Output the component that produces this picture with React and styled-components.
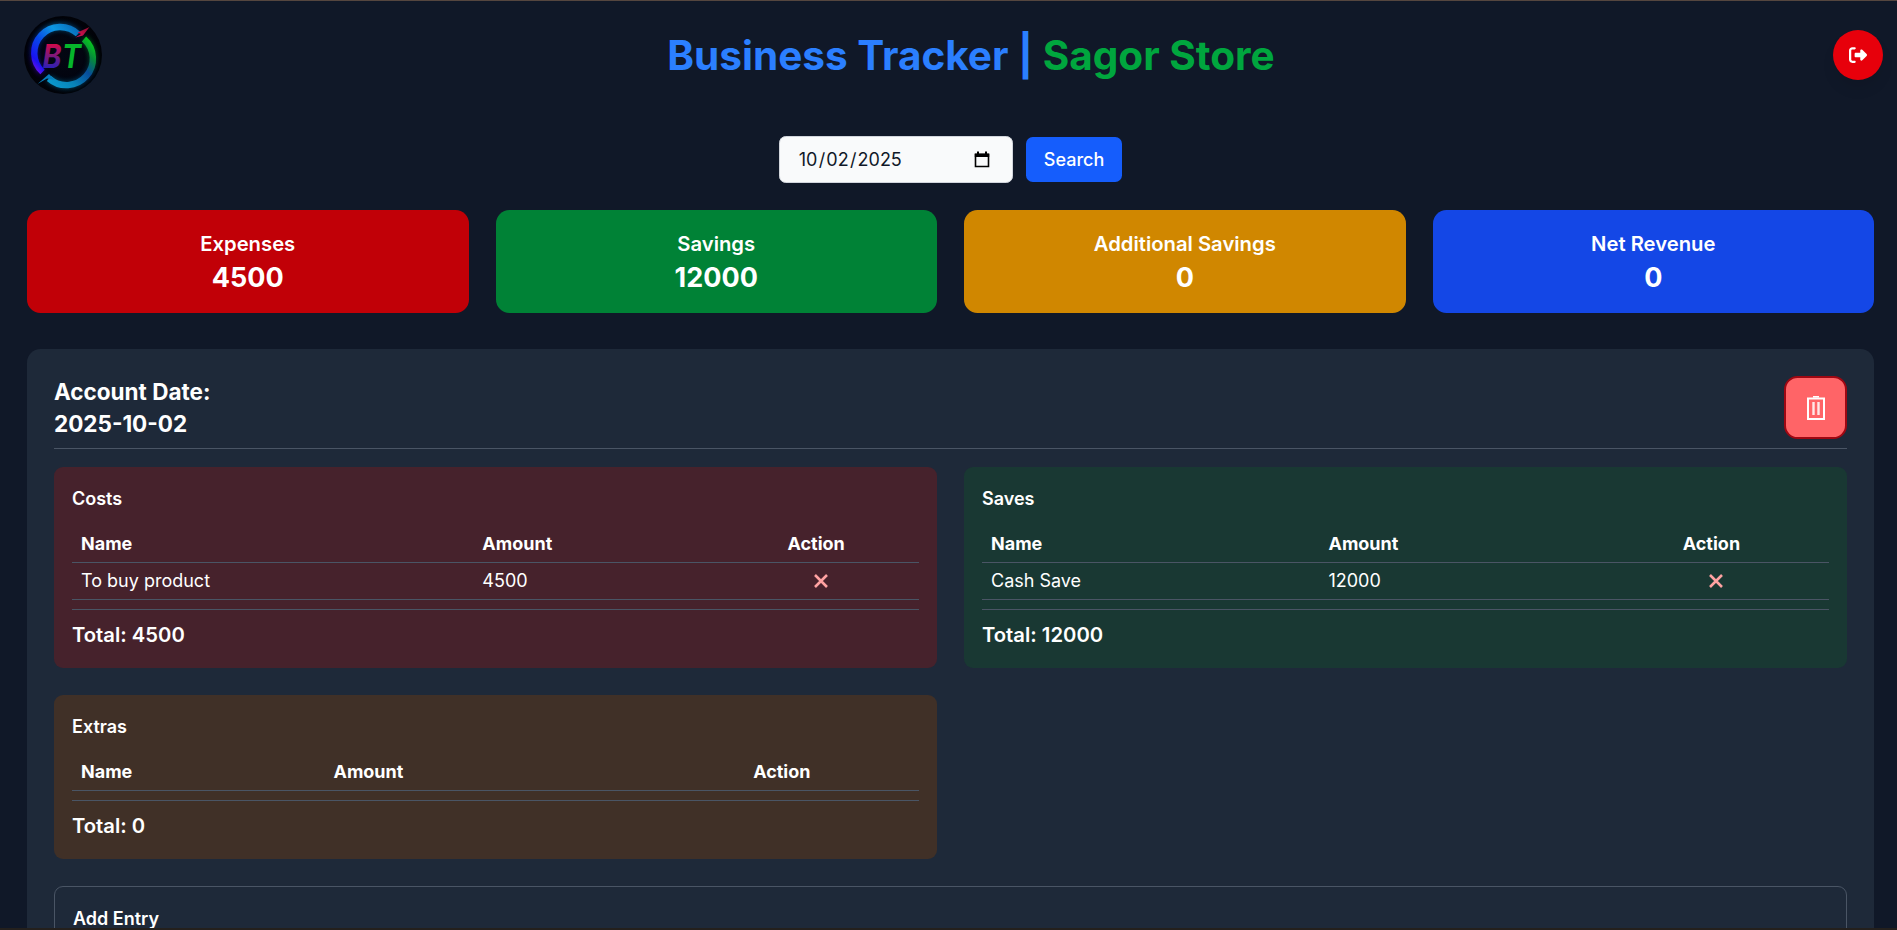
import React from "react";
import styled, { createGlobalStyle } from "styled-components";
import { FaRightFromBracket } from "react-icons/fa6";

const GlobalStyle = createGlobalStyle`
  *, *::before, *::after { box-sizing: border-box; margin: 0; padding: 0; }
  html { font-size: 18px; }
  html, body { height: 100%; overflow: hidden; background: #101828; }
  body {
    font-family: Inter, "Liberation Sans", sans-serif;
    line-height: 1.5;
    color: #fff;
  }
  button, input { font: inherit; color: inherit; border: 0; }
`;

const Page = styled.div`
  width: 1901px;
  height: 930px;
  overflow: hidden;
  border-top: 1px solid #55463f;
  border-bottom: 2px solid #24201d;
`;

const Header = styled.header`
  display: flex;
  align-items: center;
  justify-content: space-between;
  height: 108px;
  padding: 0 18px 0 24px;
`;

const Logo = styled.svg`
  width: 78px;
  height: 78px;
  display: block;
`;

const Title = styled.h1`
  margin-left: 7px;
  font-size: 40.5px;
  line-height: 45px;
  font-weight: 700;
  color: #2b7fff;
  span { color: #00a63e; }
`;

const LogoutButton = styled.button`
  display: grid;
  place-items: center;
  width: 50px;
  height: 50px;
  border-radius: 50%;
  background: #e7000b;
  font-size: 18px;
  box-shadow: 0 10px 15px -3px rgba(0, 0, 0, 0.1);
`;

const Main = styled.main`
  padding: 27px;
`;

const SearchBar = styled.form`
  display: flex;
  align-items: center;
  justify-content: center;
  gap: 13px;
  height: 47px;
  margin-bottom: 26.9px;
`;

const DateField = styled.div`
  display: flex;
  align-items: center;
  justify-content: space-between;
  width: 234px;
  height: 47px;
  padding: 0 22px 0 19px;
  border: 1px solid #d1d5dc;
  border-radius: 6.75px;
  background: #f9fafb;
  color: #101828;
  svg { display: block; }
`;

const Slash = styled.span`
  margin: 0 1.2px;
`;

const SearchButton = styled.button`
  height: 45px;
  padding: 9px 18px;
  border-radius: 6.75px;
  background: #155dfc;
  font-weight: 500;
`;

const Summary = styled.section`
  display: grid;
  grid-template-columns: repeat(4, 1fr);
  gap: 27px;
  margin-bottom: 36px;
`;

const SummaryCard = styled.div`
  padding: 18px;
  border-radius: 13.5px;
  text-align: center;
  background: ${(p) => p.$color};
`;

const SummaryLabel = styled.h2`
  font-size: 20.25px;
  line-height: 32px;
  font-weight: 600;
`;

const SummaryValue = styled.p`
  font-size: 27px;
  line-height: 35.5px;
  font-weight: 700;
`;

const Account = styled.section`
  padding: 27px;
  border-radius: 13.5px;
  background: #1e2939;
`;

const AccountHead = styled.div`
  display: flex;
  justify-content: space-between;
  padding-bottom: 9px;
  margin-bottom: 18px;
  border-bottom: 1px solid #4a5565;
`;

const AccountDate = styled.h2`
  font-size: 22.5px;
  line-height: 31.5px;
  font-weight: 700;
`;

const DeleteButton = styled.button`
  display: grid;
  place-items: center;
  width: 63px;
  height: 63px;
  border: 2px solid #9f0712;
  border-radius: 13.5px;
  background: #ff6467;
`;

const Ledgers = styled.div`
  display: grid;
  grid-template-columns: 1fr 1fr;
  gap: 27px;
  margin-bottom: 27px;
`;

const Ledger = styled.article`
  padding: 18px;
  border-radius: 9px;
  background: ${(p) => p.$color};
`;

const BlockTitle = styled.h3`
  font-size: 18px;
  line-height: 27px;
  font-weight: 600;
  margin-bottom: 13.5px;
`;

const Table = styled.table`
  width: 100%;
  border-collapse: separate;
  border-spacing: 0;
  th, td {
    padding: 4.5px 9px;
    text-align: left;
    border-bottom: 1px solid #4a5565;
  }
  th { font-weight: 700; }
  th:last-child, td:last-child { text-align: center; }
`;

const RemoveButton = styled.button`
  display: inline-block;
  height: 27px;
  margin-left: 9px;
  background: none;
  color: #ffa2a2;
  vertical-align: top;
  svg { display: block; }
`;

const Total = styled.p`
  margin-top: 9px;
  padding-top: 9px;
  border-top: 1px solid #4a5565;
  font-size: 20.25px;
  line-height: 31.5px;
  font-weight: 600;
`;

const EntryForm = styled.section`
  height: 200px;
  padding: 18px;
  border: 1px solid #4a5565;
  border-radius: 9px;
`;

const summary = [
  { label: "Expenses", value: 4500, color: "#c10007" },
  { label: "Savings", value: 12000, color: "#008236" },
  { label: "Additional Savings", value: 0, color: "#d08700" },
  { label: "Net Revenue", value: 0, color: "#1447e6" },
];

const ledgers = [
  { title: "Costs", color: "#46222c", total: 4500, rows: [["To buy product", 4500]] },
  { title: "Saves", color: "#193833", total: 12000, rows: [["Cash Save", 12000]] },
  { title: "Extras", color: "#403027", total: 0, rows: [] },
];

function BrandLogo() {
  return (
    <Logo viewBox="0 0 78 78">
      <defs>
        <radialGradient id="disc">
          <stop offset="0" stopColor="#030712" />
          <stop offset=".7" stopColor="#02040f" />
          <stop offset="1" stopColor="#010207" />
        </radialGradient>
        <linearGradient id="ringLeft" x1="0" y1="1" x2="1" y2="0">
          <stop offset="0" stopColor="#7b10ef" />
          <stop offset=".15" stopColor="#1a12f0" />
          <stop offset=".42" stopColor="#0748e8" />
          <stop offset=".7" stopColor="#0c98e2" />
          <stop offset="1" stopColor="#0868b4" />
        </linearGradient>
        <linearGradient id="ringRight" x1="1" y1="0" x2="0" y2="1">
          <stop offset="0" stopColor="#08d815" />
          <stop offset=".22" stopColor="#06883c" />
          <stop offset=".42" stopColor="#074c9b" />
          <stop offset=".7" stopColor="#0883b8" />
          <stop offset="1" stopColor="#0b9bd0" />
        </linearGradient>
        <linearGradient id="letterB" x1="0" y1="0" x2="0" y2="1">
          <stop offset=".2" stopColor="#d00a4c" />
          <stop offset=".55" stopColor="#6f1b83" />
          <stop offset=".85" stopColor="#2220bd" />
        </linearGradient>
        <linearGradient id="bolt" x1="1" y1="0" x2="0" y2="1">
          <stop offset="0" stopColor="#8e0b2c" />
          <stop offset="1" stopColor="#e0135e" />
        </linearGradient>
        <filter id="glow" x="-30%" y="-30%" width="160%" height="160%">
          <feGaussianBlur stdDeviation="2.6" />
        </filter>
      </defs>
      <circle cx="39" cy="39" r="39" fill="url(#disc)" />
      <g fill="none" strokeWidth="7" opacity=".5" filter="url(#glow)">
        <path d="M18.500 56A26 26 0 0 1 54 17.500" stroke="url(#ringLeft)" />
        <path d="M60 23A26 26 0 0 1 25 62.500" stroke="url(#ringRight)" />
      </g>
      <g fill="none" strokeWidth="6.400">
        <path d="M18.500 56A26 26 0 0 1 54 18" stroke="url(#ringLeft)" />
        <path d="M60 23A26 26 0 0 1 25 62.500" stroke="url(#ringRight)" />
      </g>
      <path d="M65.500 11L53.500 16.500L57 18L51.500 21.500L59 19.500Z" fill="url(#bolt)" />
      <path d="M13.500 68L25 58L31 64L23 62.500Z" fill="#087dbb" />
      <g fontFamily="Inter, sans-serif" fontSize="32" fontWeight="700" fontStyle="italic">
        <text x="18.5" y="51.5" textLength="19" lengthAdjust="spacingAndGlyphs" fill="url(#letterB)">B</text>
        <text x="38" y="51.5" textLength="19" lengthAdjust="spacingAndGlyphs" fill="#06b52b">T</text>
      </g>
    </Logo>
  );
}

function LedgerCard({ title, color, rows, total }) {
  return (
    <Ledger $color={color}>
      <BlockTitle>{title}</BlockTitle>
      <Table>
        <thead>
          <tr><th>Name</th><th>Amount</th><th>Action</th></tr>
        </thead>
        <tbody>
          {rows.map(([name, amount]) => (
            <tr key={name}>
              <td>{name}</td>
              <td>{amount}</td>
              <td>
                <RemoveButton aria-label="Remove">
                  <svg width="14" height="14" viewBox="0 0 14 14" fill="none" stroke="currentColor" strokeWidth="2.600">
                    <path d="M1 1L13 13M13 1L1 13" />
                  </svg>
                </RemoveButton>
              </td>
            </tr>
          ))}
        </tbody>
      </Table>
      <Total>Total: {total}</Total>
    </Ledger>
  );
}

export default function App() {
  return (
    <Page>
      <GlobalStyle />
      <Header>
        <BrandLogo />
        <Title>Business Tracker | <span>Sagor Store</span></Title>
        <LogoutButton aria-label="Log out"><FaRightFromBracket /></LogoutButton>
      </Header>
      <Main>
        <SearchBar>
          <DateField>
            <span>10<Slash>/</Slash>02<Slash>/</Slash>2025</span>
            <svg width="16" height="17" viewBox="0 0 16 17">
              <path d="M1.500 3.500h13v12h-13z" fill="none" stroke="#000" strokeWidth="1.600" />
              <path d="M.8 2.500h14.400v3.500H.8zM3 .5h2v2H3zM11 .5h2v2h-2z" fill="#000" />
            </svg>
          </DateField>
          <SearchButton type="button">Search</SearchButton>
        </SearchBar>
        <Summary>
          {summary.map((s) => (
            <SummaryCard key={s.label} $color={s.color}>
              <SummaryLabel>{s.label}</SummaryLabel>
              <SummaryValue>{s.value}</SummaryValue>
            </SummaryCard>
          ))}
        </Summary>
        <Account>
          <AccountHead>
            <AccountDate>Account Date:<br />2025-10-02</AccountDate>
            <DeleteButton aria-label="Delete account">
              <svg width="18" height="24" viewBox="0 0 18 24" fill="none" stroke="#fff">
                <path d="M1 2.500h16v20.500H1z" strokeWidth="2" />
                <path d="M6 .8h6" strokeWidth="1.600" />
                <path d="M6.500 6v13M11.500 6v13" strokeWidth="2.400" opacity=".85" />
              </svg>
            </DeleteButton>
          </AccountHead>
          <Ledgers>
            {ledgers.map((l) => <LedgerCard key={l.title} {...l} />)}
          </Ledgers>
          <EntryForm>
            <BlockTitle>Add Entry</BlockTitle>
          </EntryForm>
        </Account>
      </Main>
    </Page>
  );
}
